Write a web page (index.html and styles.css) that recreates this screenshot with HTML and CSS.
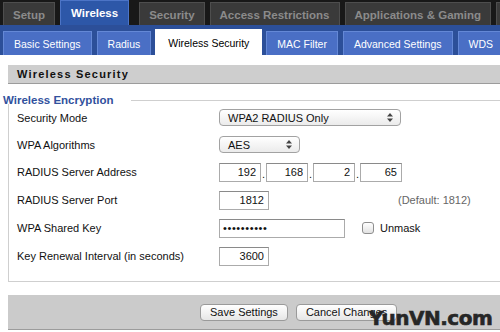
FILE: index.html
```html
<!DOCTYPE html>
<html lang="en">
<head>
  <meta charset="UTF-8" />
  <meta name="viewport" content="width=device-width, initial-scale=1.0"/>
  <title>Wireless Security</title>
  <link rel="stylesheet" href="styles.css">
</head>
<body>
<div class="page">

  <nav class="mainnav">
    <a class="tab">Setup</a>
    <a class="tab active">Wireless</a>
    <a class="tab gap">Security</a>
    <a class="tab">Access Restrictions</a>
    <a class="tab">Applications &amp; Gaming</a>
    <a class="tab more"></a>
  </nav>

  <nav class="subnav">
    <a class="subtab">Basic Settings</a>
    <a class="subtab">Radius</a>
    <a class="subtab active">Wireless Security</a>
    <a class="subtab">MAC Filter</a>
    <a class="subtab">Advanced Settings</a>
    <a class="subtab">WDS</a>
  </nav>

  <main class="content">
    <div class="sectionbar">Wireless Security</div>

    <div class="group">
      <div class="legend"><span>Wireless Encryption</span></div>
      <div class="group-body">
        <div class="row tight">
          <label>Security Mode</label>
          <div class="ctrl">
            <div class="select wide"><span>WPA2 RADIUS Only</span>
              <svg width="6" height="9" viewBox="0 0 6 9"><path d="M3 0 L6 3.4 L0 3.4 Z M0 5.6 L6 5.6 L3 9 Z" fill="#444"/></svg>
            </div>
          </div>
        </div>
        <div class="row tight">
          <label>WPA Algorithms</label>
          <div class="ctrl">
            <div class="select narrow"><span>AES</span>
              <svg width="6" height="9" viewBox="0 0 6 9"><path d="M3 0 L6 3.4 L0 3.4 Z M0 5.6 L6 5.6 L3 9 Z" fill="#444"/></svg>
            </div>
          </div>
        </div>
        <div class="row">
          <label>RADIUS Server Address</label>
          <div class="ctrl">
            <input class="field ip" type="text" value="192"><span class="dot">.</span>
            <input class="field ip" type="text" value="168"><span class="dot">.</span>
            <input class="field ip" type="text" value="2"><span class="dot">.</span>
            <input class="field ip" type="text" value="65">
          </div>
        </div>
        <div class="row">
          <label>RADIUS Server Port</label>
          <div class="ctrl">
            <input class="field short" type="text" value="1812">
            <span class="hint">(Default: 1812)</span>
          </div>
        </div>
        <div class="row">
          <label>WPA Shared Key</label>
          <div class="ctrl">
            <input class="field long" type="password" value="secretkey1">
            <span class="check"></span>
            <span class="check-label">Unmask</span>
          </div>
        </div>
        <div class="row">
          <label>Key Renewal Interval (in seconds)</label>
          <div class="ctrl">
            <input class="field short" type="text" value="3600">
          </div>
        </div>
      </div>
    </div>

    <div class="actions">
      <button>Save Settings</button>
      <button>Cancel Changes</button>
    </div>
  </main>

  <span class="watermark">YunVN.com</span>
</div>
</body>
</html>
```

FILE: styles.css
```css
body {
  margin: 0; font-family: "Liberation Sans", Arial, sans-serif; font-size: 11px;
  color: #111; background: #fff; width: 500px; height: 332px; overflow: hidden;
}
.page { position: relative; height: 332px; }

/* top tabs */
.mainnav {
  display: flex; align-items: flex-end; height: 25px;
  background: #181818; padding-left: 3px; white-space: nowrap;
}
.tab {
  display: flex; align-items: center; flex-shrink: 0;
  height: 23px; box-sizing: border-box; padding: 1px 9px 0;
  background: #3a3a3a; border: 1px solid #4e4e4e; border-bottom: none;
  color: #8b8b8b; font-weight: bold; font-size: 11.5px; margin-right: 5px;
}
.tab.active {
  height: 25px; background: #2d57a8; border-color: #4c74c6;
  color: #fff; padding: 0 10px;
}
.tab.gap { margin-left: 5px; }
.tab.more { width: 40px; }

/* second row */
.subnav {
  display: flex; align-items: flex-end; height: 30px; box-sizing: border-box;
  background: #2c4f99; padding-left: 3px; white-space: nowrap;
}
.subtab {
  display: flex; align-items: center; flex-shrink: 0;
  height: 24px; box-sizing: border-box; padding: 0 10px;
  background: #4a6fc5; border: 1px solid #6488d6; border-bottom: none;
  color: #fff; font-size: 10.5px; margin-right: 5px;
}
.subtab.active {
  height: 26px; background: #fff; border-color: #fff; color: #000;
  padding: 0 12px; margin-right: 4px; margin-left: -1px;
}

.content { padding-top: 10px; }

.sectionbar {
  margin-left: 8px; height: 18px; display: flex; align-items: center;
  padding-left: 9px; background: #cecece; border-bottom: 1px solid #9c9c9c;
  font-weight: bold; font-size: 11px; letter-spacing: 1.2px;
}

/* fieldset */
.group { margin-left: 3px; }
.legend {
  display: flex; align-items: center; height: 8px; margin-top: 12px;
  color: #31519d; font-weight: bold; font-size: 11.5px; white-space: nowrap;
}
.legend::after {
  content: ""; flex: 1; border-top: 1px solid #cfcfcf; margin-left: 18px;
}
.group-body {
  margin-left: 5px; padding-bottom: 11px;
  border-left: 1px solid #cfcfcf; border-bottom: 1px solid #cfcfcf;
}
.row {
  display: grid; grid-template-columns: 202px 1fr; align-items: center;
  height: 28px; padding-left: 8px;
}
.row.tight { height: 27px; }
.ctrl { display: flex; align-items: center; }

.select {
  display: inline-flex; align-items: center; justify-content: space-between;
  height: 17px; box-sizing: border-box; padding: 0 7px 0 8px;
  border: 1px solid #a2a2a2; border-radius: 4px;
  background: linear-gradient(#ffffff, #ebebeb); font-size: 11px;
}
.select.wide { width: 182px; }
.select.narrow { width: 81px; }

.field {
  height: 19px; box-sizing: border-box; margin: 0; padding: 0 4px;
  border: 1px solid #ababab; border-top-color: #8a8a8a;
  font: 11px "Liberation Sans", Arial, sans-serif; color: #111;
  text-align: right; background: #fff;
}
.field.ip { width: 42px; }
.field.short { width: 50px; }
.field.long { width: 126px; text-align: left; padding-left: 3px; letter-spacing: 0.6px; }
.dot { width: 5px; text-align: center; padding-top: 4px; }

.hint { margin-left: 129px; color: #666; }
.check {
  width: 12px; height: 12px; box-sizing: border-box; margin-left: 17px;
  border: 1px solid #8e8e8e; border-radius: 3px;
  background: linear-gradient(#ffffff, #e2e2e2);
}
.check-label { margin-left: 6px; }

/* bottom bar */
.actions {
  display: flex; align-items: center; gap: 8px;
  margin: 13px 0 0 8px; height: 34px; padding-left: 192px;
  background: #cbcbcb; border-bottom: 1px solid #9c9c9c;
}
button {
  height: 17px; padding: 0 9px; font: 11px "Liberation Sans", Arial, sans-serif;
  color: #111; border: 1px solid #9a9a9a; border-radius: 4px;
  background: linear-gradient(#ffffff, #e6e6e6); cursor: pointer;
}

.watermark {
  position: absolute; left: 369px; top: 306px;
  font: bold 20px "DejaVu Sans", sans-serif; color: #262626;
  letter-spacing: -0.5px; -webkit-text-stroke: 0.6px #262626;
}
```
